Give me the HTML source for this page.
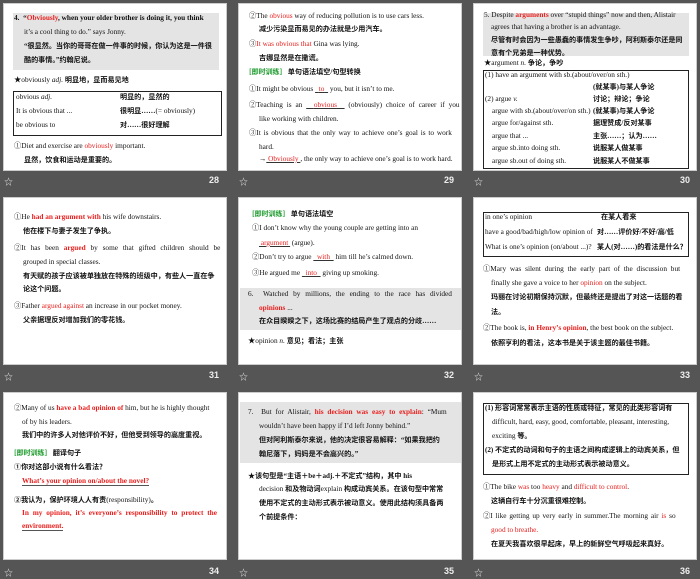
<!DOCTYPE html>
<html><head><meta charset="utf-8"><style>
*{margin:0;padding:0;box-sizing:border-box}
body{width:700px;height:578px;background:#555;position:relative;overflow:hidden;font-family:"Liberation Serif","Noto Serif CJK SC",serif;color:#111}
.s{position:absolute;width:224px;height:168px;background:#fff;border:1px solid #ccc;overflow:hidden}
.l{position:absolute;height:10px;line-height:10px;font-size:7.3px;white-space:nowrap}
.c{font-family:"Liberation Serif","Noto Sans CJK SC",sans-serif;font-weight:bold;font-size:7.1px}
.r{color:#e8201e}
.g{color:#1a9a2a;font-family:"Noto Sans CJK SC",sans-serif;font-weight:bold;font-size:7px}
.u{text-decoration:underline;text-decoration-color:#333}
.box{position:absolute;border:1px solid #222}
.gray{position:absolute;background:#e4e4e4}
.star{position:absolute;color:#ddd;font-size:9px}
.num{position:absolute;color:#eee;font-size:9px;font-weight:bold;font-family:"Liberation Sans",sans-serif}
</style></head><body>

<!-- slide 28 -->
<div class="s" style="left:3px;top:3px">
<div class="gray" style="left:9px;top:9px;width:206px;height:57px"></div>
<div class="l" style="left:10px;top:9px;font-weight:bold">4.&nbsp; “<span class="r">Obviously</span>, when your older brother is doing it, you think</div>
<div class="l" style="left:20px;top:23px">it’s a cool thing to do.” says Jonny.</div>
<div class="l c" style="left:20px;top:37px">“很显然。当你的哥哥在做一件事的时候，你认为这是一件很</div>
<div class="l c" style="left:20px;top:51px">酷的事情。”约翰尼说。</div>
<div class="l" style="left:10px;top:71px">★obviously <i>adj.</i> <b class="c">明显地，显而易见地</b></div>
<div class="box" style="left:9px;top:87px;width:209px;height:45px"></div>
<div class="l" style="left:12px;top:88px">obvious <i>adj.</i></div><div class="l c" style="left:116px;top:88px">明显的，显然的</div>
<div class="l" style="left:12px;top:102px">It is obvious that ...</div><div class="l" style="left:116px;top:102px"><b class="c">很明显……</b>(= obviously)</div>
<div class="l" style="left:12px;top:116px">be obvious to</div><div class="l c" style="left:116px;top:116px">对……很好理解</div>
<div class="l" style="left:10px;top:137px">①Diet and exercise are <span class="r">obviously</span> important.</div>
<div class="l c" style="left:20px;top:151px">显然，饮食和运动是重要的。</div>
</div>

<!-- slide 29 -->
<div class="s" style="left:238px;top:3px">
<div class="l" style="left:10px;top:7px">②The <span class="r">obvious</span> way of reducing pollution is to use cars less.</div>
<div class="l c" style="left:20px;top:20px">减少污染显而易见的办法就是少用汽车。</div>
<div class="l" style="left:10px;top:35px">③<span class="r">It was obvious that</span> Gina was lying.</div>
<div class="l c" style="left:20px;top:49px">吉娜显然是在撒谎。</div>
<div class="l" style="left:10px;top:63px"><span class="g">[即时训练]</span>&nbsp;&nbsp;&nbsp;<b class="c">单句语法填空/句型转换</b></div>
<div class="l" style="left:10px;top:80px">①It might be obvious <span class="u">&nbsp;&nbsp;<span class="r">to</span>&nbsp;&nbsp;</span> you, but it isn’t to me.</div>
<div class="l" style="left:10px;top:96px;word-spacing:2px">②Teaching is an <span class="u">&nbsp;&nbsp;<span class="r">obvious</span>&nbsp;&nbsp;</span> (obviously) choice of career if you</div>
<div class="l" style="left:20px;top:110px">like working with children.</div>
<div class="l" style="left:10px;top:124px;word-spacing:1px">③It is obvious that the only way to achieve one’s goal is to work</div>
<div class="l" style="left:20px;top:138px">hard.</div>
<div class="l" style="left:20px;top:150px">→<span class="u r">&nbsp;Obviously&nbsp;</span>, the only way to achieve one’s goal is to work hard.</div>
</div>

<!-- slide 30 -->
<div class="s" style="left:473px;top:3px">
<div class="gray" style="left:9px;top:9px;width:206px;height:43px"></div>
<div class="l" style="left:10px;top:6px">5. Despite <span class="r"><b>arguments</b></span> over “stupid things” now and then, Alistair</div>
<div class="l" style="left:17px;top:18px">agrees that having a brother is an advantage.</div>
<div class="l c" style="left:17px;top:31px">尽管有时会因为一些愚蠢的事情发生争吵，阿利斯泰尔还是同</div>
<div class="l c" style="left:17px;top:44px">意有个兄弟是一种优势。</div>
<div class="l" style="left:10px;top:54px">★argument <i>n.</i> <b class="c">争论，争吵</b></div>
<div class="box" style="left:9px;top:66px;width:206px;height:99px"></div>
<div class="l" style="left:11px;top:66px">(1) have an argument with sb.(about/over/on sth.)</div>
<div class="l c" style="left:119px;top:78px">(就某事)与某人争论</div>
<div class="l" style="left:11px;top:90px">(2) argue <i>v.</i></div><div class="l c" style="left:119px;top:90px">讨论；辩论；争论</div>
<div class="l" style="left:18px;top:102px">argue with sb.(about/over/on sth.)</div><div class="l c" style="left:119px;top:102px">(就某事)与某人争论</div>
<div class="l" style="left:18px;top:114px">argue for/against sth.</div><div class="l c" style="left:119px;top:114px">据理赞成/反对某事</div>
<div class="l" style="left:18px;top:127px">argue that ...</div><div class="l c" style="left:119px;top:127px">主张……；认为……</div>
<div class="l" style="left:18px;top:139px">argue sb.into doing sth.</div><div class="l c" style="left:119px;top:139px">说服某人做某事</div>
<div class="l" style="left:18px;top:152px">argue sb.out of doing sth.</div><div class="l c" style="left:119px;top:152px">说服某人不做某事</div>
</div>

<!-- slide 31 -->
<div class="s" style="left:3px;top:197px">
<div class="l" style="left:10px;top:14px">①He <span class="r"><b>had an argument with</b></span> his wife downstairs.</div>
<div class="l c" style="left:19px;top:28px">他在楼下与妻子发生了争执。</div>
<div class="l" style="left:10px;top:45px;word-spacing:3px">②It has been <span class="r"><b>argued</b></span> by some that gifted children should be</div>
<div class="l" style="left:19px;top:59px">grouped in special classes.</div>
<div class="l c" style="left:19px;top:73px">有天赋的孩子应该被单独放在特殊的班级中，有些人一直在争</div>
<div class="l c" style="left:19px;top:86px">论这个问题。</div>
<div class="l" style="left:10px;top:103px">③Father <span class="r">argued against</span> an increase in our pocket money.</div>
<div class="l c" style="left:19px;top:117px">父亲据理反对增加我们的零花钱。</div>
</div>

<!-- slide 32 -->
<div class="s" style="left:238px;top:197px">
<div class="gray" style="left:1px;top:90px;width:222px;height:42px"></div>
<div class="l" style="left:13px;top:11px"><span class="g">[即时训练]</span>&nbsp;&nbsp;&nbsp;<b class="c">单句语法填空</b></div>
<div class="l" style="left:13px;top:25px">①I don’t know why the young couple are getting into an</div>
<div class="l" style="left:20px;top:40px"><span class="u r">&nbsp;argument&nbsp;</span> (argue).</div>
<div class="l" style="left:13px;top:54px">②Don’t try to argue <span class="u">&nbsp;&nbsp;<span class="r">with</span>&nbsp;&nbsp;</span> him till he’s calmed down.</div>
<div class="l" style="left:13px;top:70px">③He argued me <span class="u">&nbsp;&nbsp;<span class="r">into</span>&nbsp;&nbsp;</span> giving up smoking.</div>
<div class="l" style="left:9px;top:91px;word-spacing:3px">6.&nbsp; Watched by millions, the ending to the race has divided</div>
<div class="l" style="left:20px;top:105px"><span class="r"><b>opinions</b></span> ...</div>
<div class="l c" style="left:20px;top:118px">在众目睽睽之下，这场比赛的结局产生了观点的分歧……</div>
<div class="l" style="left:9px;top:138px">★opinion <i>n.</i> <b class="c">意见；看法；主张</b></div>
</div>

<!-- slide 33 -->
<div class="s" style="left:473px;top:197px">
<div class="box" style="left:9px;top:14px;width:206px;height:45px"></div>
<div class="l" style="left:11px;top:14px">in one’s opinion</div><div class="l c" style="left:127px;top:14px">在某人看来</div>
<div class="l" style="left:11px;top:29px">have a good/bad/high/low opinion of</div><div class="l c" style="left:123px;top:29px">对……评价好/不好/高/低</div>
<div class="l" style="left:11px;top:44px">What is one’s opinion (on/about ...)?</div><div class="l c" style="left:123px;top:44px">某人(对……)的看法是什么？</div>
<div class="l" style="left:9px;top:66px;word-spacing:2px">①Mary was silent during the early part of the discussion but</div>
<div class="l" style="left:17px;top:80px">finally she gave a voice to her <span class="r">opinion</span> on the subject.</div>
<div class="l c" style="left:17px;top:94px">玛丽在讨论初期保持沉默，但最终还是提出了对这一话题的看</div>
<div class="l c" style="left:17px;top:109px">法。</div>
<div class="l" style="left:9px;top:125px">②The book is, <span class="r"><b>in Henry’s opinion</b></span>, the best book on the subject.</div>
<div class="l c" style="left:17px;top:140px">依照亨利的看法，这本书是关于该主题的最佳书籍。</div>
</div>

<!-- slide 34 -->
<div class="s" style="left:3px;top:392px">
<div class="l" style="left:10px;top:10px">②Many of us <span class="r"><b>have a bad opinion of</b></span> him, but he is highly thought</div>
<div class="l" style="left:18px;top:24px">of by his leaders.</div>
<div class="l c" style="left:18px;top:37px">我们中的许多人对他评价不好，但他受到领导的高度重视。</div>
<div class="l" style="left:10px;top:55px"><span class="g">[即时训练]</span>&nbsp;&nbsp;&nbsp;<b class="c">翻译句子</b></div>
<div class="l c" style="left:10px;top:69px">①你对这部小说有什么看法？</div>
<div class="l r" style="left:18px;top:83px;border-bottom:1px solid #555;font-weight:bold">What’s your opinion on/about the novel?</div>
<div class="l" style="left:10px;top:102px"><b class="c">②我认为，保护环境人人有责</b>(responsibility)<b class="c">。</b></div>
<div class="l r" style="left:18px;top:115px;word-spacing:2px;font-weight:bold">In my opinion, it’s everyone’s responsibility to protect the</div>
<div class="l r" style="left:18px;top:128px;font-weight:bold;border-bottom:1px solid #555">environment.</div>
</div>

<!-- slide 35 -->
<div class="s" style="left:238px;top:392px">
<div class="gray" style="left:1px;top:9px;width:222px;height:61px"></div>
<div class="l" style="left:9px;top:14px;word-spacing:2px">7.&nbsp; But for Alistair, <span class="r"><b>his decision was easy to explain</b></span>: “Mum</div>
<div class="l" style="left:20px;top:28px">wouldn’t have been happy if I’d left Jonny behind.”</div>
<div class="l c" style="left:20px;top:42px">但对阿利斯泰尔来说，他的决定很容易解释：“如果我把约</div>
<div class="l c" style="left:20px;top:56px">翰尼落下，妈妈是不会高兴的。”</div>
<div class="l c" style="left:9px;top:78px">★该句型是“主语＋be＋adj.＋不定式”结构，其中 his</div>
<div class="l" style="left:20px;top:91px">decision <b class="c">和及物动词</b>explain <b class="c">构成动宾关系。在该句型中常常</b></div>
<div class="l c" style="left:20px;top:105px">使用不定式的主动形式表示被动意义。使用此结构须具备两</div>
<div class="l c" style="left:20px;top:119px">个前提条件：</div>
</div>

<!-- slide 36 -->
<div class="s" style="left:473px;top:392px">
<div class="box" style="left:9px;top:10px;width:206px;height:72px"></div>
<div class="l c" style="left:11px;top:10px">(1) 形容词常常表示主语的性质或特征，常见的此类形容词有</div>
<div class="l" style="left:18px;top:24px">difficult, hard, easy, good, comfortable, pleasant, interesting,</div>
<div class="l" style="left:18px;top:38px">exciting <b class="c">等。</b></div>
<div class="l c" style="left:11px;top:52px">(2) 不定式的动词和句子的主语之间构成逻辑上的动宾关系，但</div>
<div class="l c" style="left:18px;top:66px">是形式上用不定式的主动形式表示被动意义。</div>
<div class="l" style="left:9px;top:89px">①The bike <span class="r">was</span> too <span class="r">heavy</span> and <span class="r">difficult to control</span>.</div>
<div class="l c" style="left:17px;top:103px">这辆自行车十分沉重很难控制。</div>
<div class="l" style="left:9px;top:118px;word-spacing:1px">②I like getting up very early in summer.The morning air <span class="r">is</span> so</div>
<div class="l r" style="left:17px;top:132px">good to breathe.</div>
<div class="l c" style="left:17px;top:146px">在夏天我喜欢很早起床，早上的新鲜空气呼吸起来真好。</div>
</div>

<!-- footers -->
<div class="star" style="left:4px;top:175px">☆</div><div class="num" style="left:209px;top:175px">28</div>
<div class="star" style="left:239px;top:175px">☆</div><div class="num" style="left:444px;top:175px">29</div>
<div class="star" style="left:474px;top:175px">☆</div><div class="num" style="left:680px;top:175px">30</div>
<div class="star" style="left:4px;top:370px">☆</div><div class="num" style="left:209px;top:370px">31</div>
<div class="star" style="left:239px;top:370px">☆</div><div class="num" style="left:444px;top:370px">32</div>
<div class="star" style="left:474px;top:370px">☆</div><div class="num" style="left:680px;top:370px">33</div>
<div class="star" style="left:4px;top:566px">☆</div><div class="num" style="left:209px;top:566px">34</div>
<div class="star" style="left:239px;top:566px">☆</div><div class="num" style="left:444px;top:566px">35</div>
<div class="star" style="left:474px;top:566px">☆</div><div class="num" style="left:680px;top:566px">36</div>
</body></html>
